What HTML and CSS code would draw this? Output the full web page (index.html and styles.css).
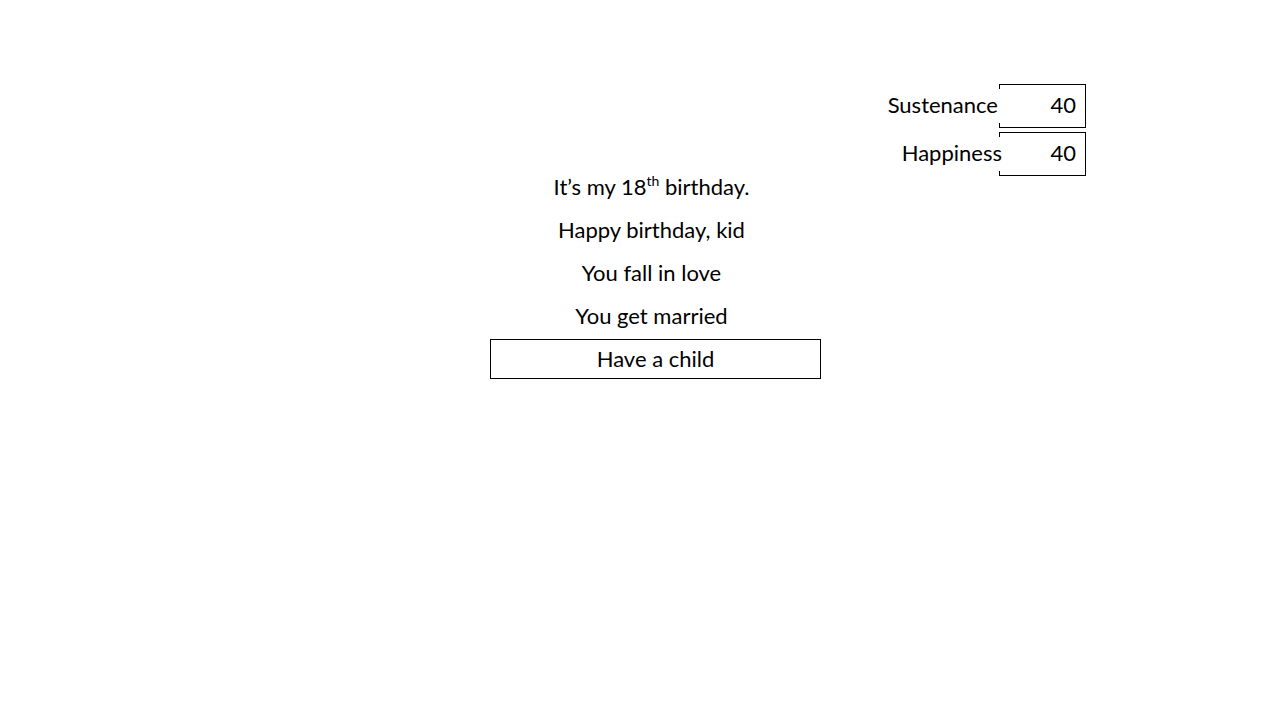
FILE: index.html
```html
<!DOCTYPE html>
<html lang="en">
<head>
<meta charset="utf-8">
<title>Life</title>
<link rel="stylesheet" href="styles.css">
</head>
<body>
<div class="page">
  <div class="stats">
    <div class="stat-row">
      <span class="stat-label label-sustenance">Sustenance</span>
      <div class="stat-box">40</div>
    </div>
    <div class="stat-row">
      <span class="stat-label label-happiness">Happiness</span>
      <div class="stat-box">40</div>
    </div>
  </div>
  <div class="story">
    <div class="line">It’s my 18<sup class="ord">th</sup> birthday.</div>
    <div class="line">Happy birthday, kid</div>
    <div class="line">You fall in love</div>
    <div class="line">You get married</div>
    <button class="choice">Have a child</button>
  </div>
</div>
</body>
</html>
```
FILE: styles.css
```css
html, body {
  margin: 0;
  padding: 0;
  background: #fff;
}
body {
  width: 1280px;
  height: 720px;
  overflow: hidden;
  font-family: Lato, "Open Sans", sans-serif;
  color: #000;
  font-size: 22px;
}
.page {
  position: relative;
  width: 1280px;
  height: 720px;
}
.stats {
  position: absolute;
  top: 84px;
  right: 194px;
  display: flex;
  flex-direction: column;
  align-items: flex-end;
  gap: 4px;
}
.stat-row {
  display: flex;
  align-items: center;
}
.stat-label {
  position: relative;
  z-index: 1;
  background: #fff;
  height: 34px;
  line-height: 32px;
  margin-top: -1px;
}
.label-sustenance {
  margin-right: -3px;
  padding-right: 4px;
}
.label-happiness {
  margin-right: -6px;
  padding-right: 3px;
}
.stat-box {
  box-sizing: border-box;
  width: 87px;
  height: 44px;
  border: 1px solid #000;
  text-align: right;
  padding-right: 9px;
  line-height: 40px;
}
.story {
  box-sizing: border-box;
  width: 400px;
  margin-left: 451.5px;
  padding-top: 165px;
  display: flex;
  flex-direction: column;
  align-items: center;
}
.line {
  height: 43px;
  line-height: 43px;
  white-space: nowrap;
}
.ord {
  font-size: 14px;
  line-height: 0;
  vertical-align: 9px;
}
.choice {
  box-sizing: border-box;
  margin: 2px 0 0 8px;
  width: 331px;
  height: 40px;
  border: 1px solid #000;
  background: #fff;
  font: inherit;
  color: #000;
  padding: 0;
  line-height: 38px;
}
```
